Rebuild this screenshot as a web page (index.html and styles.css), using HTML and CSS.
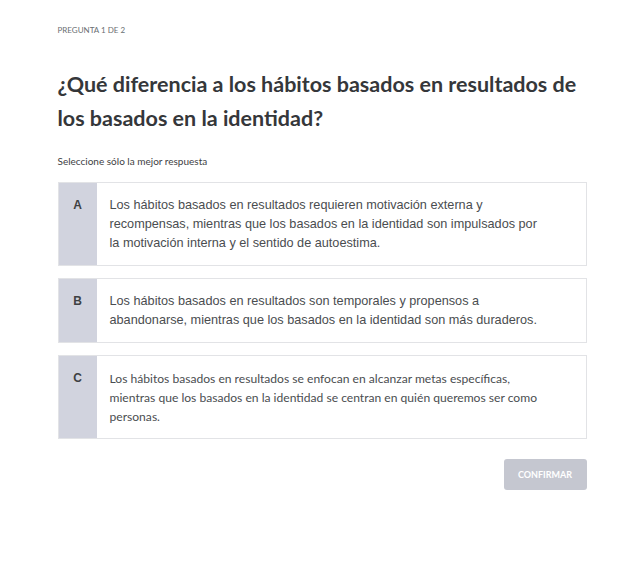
FILE: index.html
```html
<!DOCTYPE html>
<html>
<head>
    <link rel="stylesheet" href="styles.css">
    <title>Pregunta 1 de 2</title>
</head>
<body>

    <div class="quiz">
      <p class="counter">Pregunta 1 de 2</p>
      <h1 class="question">¿Qué diferencia a los hábitos basados en resultados de los basados en la identidad?</h1>
      <p class="hint">Seleccione sólo la mejor respuesta</p>

      <ul class="answers">
        <li class="answer">
          <span class="letter">A</span>
          <span class="text arial">Los hábitos basados en resultados requieren motivación externa y recompensas, mientras que los basados en la identidad son impulsados por la motivación interna y el sentido de autoestima.</span>
        </li>
        <li class="answer">
          <span class="letter">B</span>
          <span class="text arial">Los hábitos basados en resultados son temporales y propensos a abandonarse, mientras que los basados en la identidad son más duraderos.</span>
        </li>
        <li class="answer">
          <span class="letter">C</span>
          <span class="text">Los hábitos basados en resultados se enfocan en alcanzar metas específicas, mientras que los basados en la identidad se centran en quién queremos ser como personas.</span>
        </li>
      </ul>

      <div class="actions">
        <button class="confirm" disabled>Confirmar</button>
      </div>
    </div>

</body>
</html>
```

FILE: styles.css
```css
/* general styling */
* {
  box-sizing: border-box;
  margin: 0;
  padding: 0;
}

body {
  background-color: #fff;
  color: #2d2f31;
  font-family: Lato, "Open Sans", sans-serif;
}

.quiz {
  margin: 0 auto;
  padding-top: 24px;
  width: 529px;
}

.counter {
  color: #6a6f73;
  font-size: 8px;
  line-height: 12px;
  text-transform: uppercase;
}

.question {
  color: #35373a;
  font-size: 21.5px;
  font-weight: bold;
  line-height: 34px;
  margin-top: 31px;
}

.hint {
  color: #3e4143;
  font-size: 10px;
  line-height: 14px;
  margin-top: 19px;
}

.answers {
  display: flex;
  flex-direction: column;
  gap: 12px;
  list-style-type: none;
  margin-top: 14px;
}

.answer {
  background-color: #fff;
  border: 1px solid #e2e3e6;
  display: flex;
}

.letter {
  background-color: #d1d3de;
  color: #3e4143;
  flex: 0 0 38px;
  font-family: "Liberation Sans", Arial, sans-serif;
  font-size: 12px;
  font-weight: bold;
  line-height: 19px;
  padding: 13px 0 12px;
  text-align: center;
}

.text {
  color: #4a4d50;
  font-size: 12.1px;
  line-height: 19px;
  padding: 13px 38px 12px 13px;
}

.arial {
  font-family: "Liberation Sans", Arial, sans-serif;
  font-size: 12.7px;
}

.actions {
  display: flex;
  justify-content: flex-end;
  margin-top: 20px;
}

.confirm {
  background-color: #c5c7d0;
  border: none;
  border-radius: 3px;
  color: #fff;
  font-family: Lato, sans-serif;
  font-size: 9px;
  font-weight: bold;
  height: 31px;
  text-transform: uppercase;
  width: 83px;
}
```
